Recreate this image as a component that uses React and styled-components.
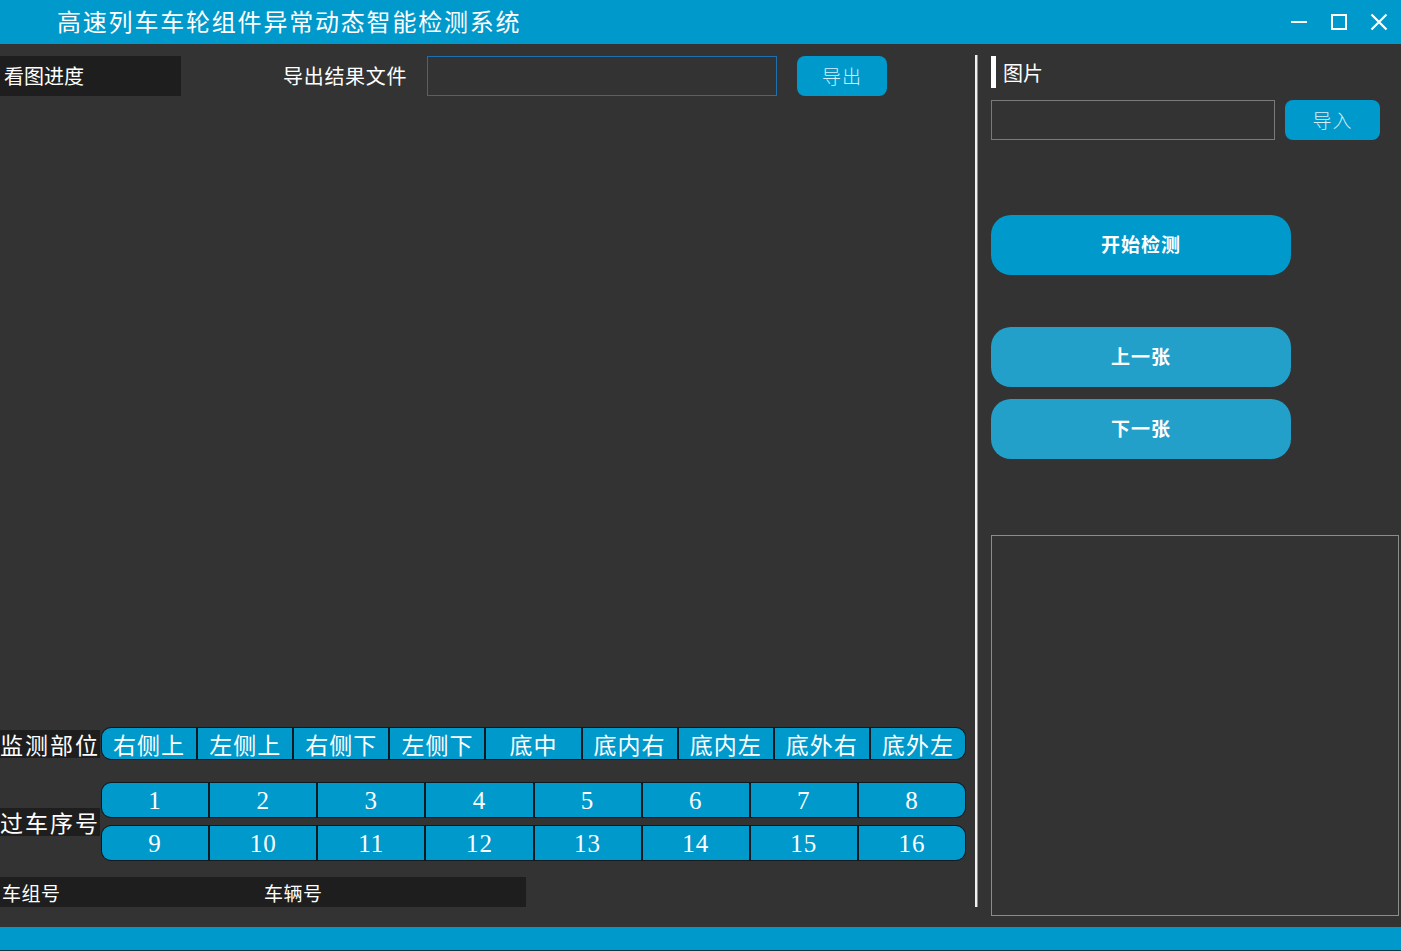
import React from 'react';
import styled, { createGlobalStyle } from 'styled-components';

const GlobalStyle = createGlobalStyle`
html, body {
  margin: 0;
  padding: 0;
  background: #333333;
}
* { box-sizing: border-box; }
`

const CN = `"Liberation Serif", "Noto Sans CJK SC", serif`;

const Window = styled.div`
width: 1401px;
height: 951px;
display: flex;
flex-direction: column;
background-color: #333333;
color: #ffffff;
font-family: ${CN};
overflow: hidden;
`
const TitleBar = styled.div`
height: 44px;
flex: none;
display: flex;
align-items: center;
background-color: #0099cc;
padding-left: 57px;
`
const Title = styled.div`
flex: 1;
font-size: 24px;
letter-spacing: 1.8px;
color: #ffffff;
margin-bottom: 3px;
`
const Controls = styled.div`
display: flex;
align-items: center;
gap: 16px;
padding-right: 10px;
`
const CtrlButton = styled.div`
width: 24px;
height: 24px;
display: flex;
align-items: center;
justify-content: center;
`
const Main = styled.div`
flex: 1;
display: flex;
min-height: 0;
`
const LeftPane = styled.div`
width: 975px;
display: flex;
flex-direction: column;
justify-content: space-between;
padding: 12px 0 20px 0;
`
const TopRow = styled.div`
display: flex;
align-items: center;
height: 40px;
`
const ProgressBox = styled.div`
width: 181px;
height: 40px;
background-color: #1e1e1e;
display: flex;
align-items: center;
padding-left: 4px;
padding-bottom: 2px;
font-size: 20px;
`
const FieldLabel = styled.div`
margin-left: 102px;
width: 144px;
font-size: 20px;
letter-spacing: 0.7px;
padding-bottom: 2px;
`
const TextInput = styled.div`
width: ${p => p.$w}px;
height: 40px;
border: 1px solid ${p => p.$border};
background-color: #333333;
`
const SmallButton = styled.div`
width: ${p => p.$w}px;
height: 40px;
margin-left: ${p => p.$ml}px;
border-radius: 8px;
background-color: #0099cc;
color: #d6eef8;
font-size: 19px;
font-weight: 300;
letter-spacing: 1px;
display: flex;
align-items: center;
justify-content: center;
padding-bottom: 2px;
`
const Bottom = styled.div`
display: flex;
flex-direction: column;
`
const SectionRow = styled.div`
display: flex;
align-items: center;
margin-top: ${p => p.$mt || 0}px;
`
const SideLabel = styled.div`
width: 100px;
height: 28px;
margin-right: 1px;
background-color: #1e1e1e;
display: flex;
align-items: center;
font-size: 23px;
letter-spacing: 2px;
white-space: nowrap;
overflow: hidden;
`
const Stack = styled.div`
display: flex;
flex-direction: column;
gap: 7px;
`
const Segments = styled.div`
width: 865px;
height: ${p => p.$h}px;
display: flex;
gap: 2px;
background-color: #0e1a20;
border: 1px solid #0e1a20;
border-radius: 10px;
overflow: hidden;
`
const Segment = styled.div`
flex: 1;
background-color: #0099cc;
display: flex;
align-items: center;
justify-content: center;
font-size: ${p => p.$fs}px;
letter-spacing: 1px;
color: #ffffff;
padding-top: 1px;
`
const CarBar = styled.div`
width: 526px;
height: 30px;
margin-top: 16px;
background-color: #1e1e1e;
display: flex;
align-items: center;
font-size: 19px;
letter-spacing: 0.5px;
`
const CarLabel = styled.span`
width: ${p => p.$w}px;
padding-left: 2px;
`
const Divider = styled.div`
width: 3px;
margin: 11px 0 20px 0;
background-color: #f0f0f0;
border-right: 1px solid #8a8a8a;
`
const RightPane = styled.div`
flex: 1;
display: flex;
flex-direction: column;
padding: 12px 2px 11px 13px;
`
const SectionHead = styled.div`
height: 32px;
display: flex;
align-items: center;
font-size: 20px;
`
const Marker = styled.span`
width: 5px;
height: 32px;
background-color: #ffffff;
margin-right: 7px;
`
const ImportRow = styled.div`
display: flex;
align-items: center;
margin-top: 12px;
`
const BigButton = styled.div`
width: 300px;
height: 60px;
margin-top: ${p => p.$mt}px;
border-radius: 20px;
background-color: ${p => p.$bg};
display: flex;
align-items: center;
justify-content: center;
font-size: 19px;
font-weight: bold;
letter-spacing: 1px;
color: #ffffff;
padding-bottom: 3px;
`
const ImageBox = styled.div`
flex: 1;
margin-top: 76px;
border: 1px solid #8c8c8c;
`
const Footer = styled.div`
height: 24px;
flex: none;
background-color: #0099cc;
border-bottom: 1px solid #12343f;
`

const parts = ['右侧上', '左侧上', '右侧下', '左侧下', '底中', '底内右', '底内左', '底外右', '底外左'];
const rows = [[1, 2, 3, 4, 5, 6, 7, 8], [9, 10, 11, 12, 13, 14, 15, 16]];

function App() {
    return (
        <Window>
            <GlobalStyle />
            <TitleBar>
                <Title>高速列车车轮组件异常动态智能检测系统</Title>
                <Controls>
                    <CtrlButton>
                        <svg width="18" height="18" viewBox="0 0 18 18"><path d="M1 9h16" stroke="#fff" strokeWidth="2" /></svg>
                    </CtrlButton>
                    <CtrlButton>
                        <svg width="18" height="18" viewBox="0 0 18 18"><rect x="2" y="2" width="14" height="14" fill="none" stroke="#fff" strokeWidth="2" /></svg>
                    </CtrlButton>
                    <CtrlButton>
                        <svg width="18" height="18" viewBox="0 0 18 18"><path d="M1.5 1.5l15 15M16.5 1.5l-15 15" stroke="#fff" strokeWidth="2.2" /></svg>
                    </CtrlButton>
                </Controls>
            </TitleBar>
            <Main>
                <LeftPane>
                    <TopRow>
                        <ProgressBox>看图进度</ProgressBox>
                        <FieldLabel>导出结果文件</FieldLabel>
                        <TextInput $w={350} $border="#1f6fae" />
                        <SmallButton $w={90} $ml={20}>导出</SmallButton>
                    </TopRow>
                    <Bottom>
                        <SectionRow>
                            <SideLabel>监测部位</SideLabel>
                            <Segments $h={33}>
                                {parts.map(p => <Segment key={p} $fs={23}>{p}</Segment>)}
                            </Segments>
                        </SectionRow>
                        <SectionRow $mt={22}>
                            <SideLabel>过车序号</SideLabel>
                            <Stack>
                                {rows.map((r, i) => (
                                    <Segments key={i} $h={36}>
                                        {r.map(n => <Segment key={n} $fs={25}>{n}</Segment>)}
                                    </Segments>
                                ))}
                            </Stack>
                        </SectionRow>
                        <CarBar>
                            <CarLabel $w={262}>车组号</CarLabel>
                            <CarLabel $w={200}>车辆号</CarLabel>
                        </CarBar>
                    </Bottom>
                </LeftPane>
                <Divider />
                <RightPane>
                    <SectionHead><Marker />图片</SectionHead>
                    <ImportRow>
                        <TextInput $w={284} $border="#7a7a7a" />
                        <SmallButton $w={95} $ml={10}>导入</SmallButton>
                    </ImportRow>
                    <BigButton $mt={75} $bg="#0099cc">开始检测</BigButton>
                    <BigButton $mt={52} $bg="#22a0c9">上一张</BigButton>
                    <BigButton $mt={12} $bg="#22a0c9">下一张</BigButton>
                    <ImageBox />
                </RightPane>
            </Main>
            <Footer />
        </Window>
    );
}

export default App;
